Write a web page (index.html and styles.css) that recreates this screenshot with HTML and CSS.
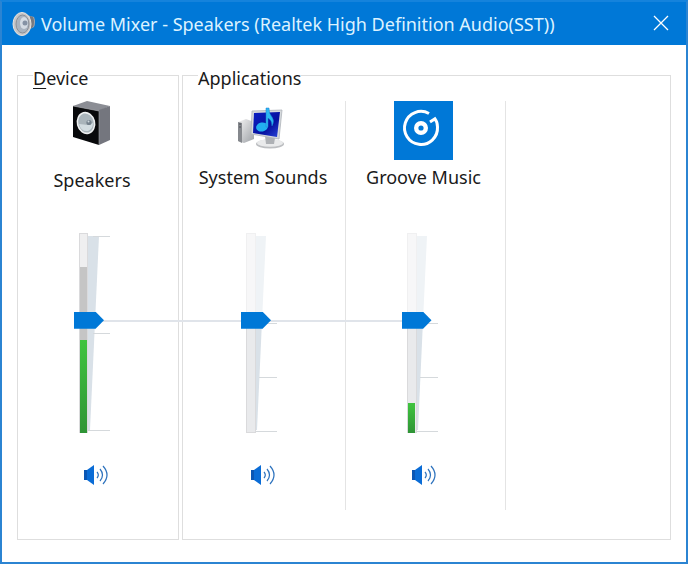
FILE: index.html
```
<!DOCTYPE html>
<html lang="en">
  <head>
    <meta charset="utf-8">
    <title>Volume Mixer</title>
    <link rel="stylesheet" href="styles.css">
  </head>
  <body>
    <!-- shared drawings -->
    <svg class="defs" width="0" height="0" aria-hidden="true">
      <defs>
        <linearGradient id="level" x1="0" y1="0" x2="0" y2="1">
          <stop offset="0" stop-color="#3fc43f"/>
          <stop offset="1" stop-color="#2f9436"/>
        </linearGradient>
        <linearGradient id="metal" x1="0" y1="0" x2="1" y2="1">
          <stop offset="0" stop-color="#f4f4f4"/>
          <stop offset="1" stop-color="#9da1a6"/>
        </linearGradient>
        <linearGradient id="screen" x1="0" y1="0" x2="1" y2="1">
          <stop offset="0" stop-color="#0a1fc4"/>
          <stop offset="0.6" stop-color="#0712a0"/>
          <stop offset="1" stop-color="#2c48dc"/>
        </linearGradient>
        <symbol id="volume" viewBox="0 0 24 22">
          <path d="M0 6h4v10H0z" fill="#0a56b4"/>
          <path d="M3 6l7-5v20l-7-5z" fill="#0a6cd6"/>
          <path d="M13 8q2.600 3 0 6M16 5q5 6 0 12M19 2q8 9 0 18" fill="none" stroke="#2d72bd" stroke-width="1.200"/>
        </symbol>
      </defs>
    </svg>

    <div class="window">
      <header class="titlebar">
        <svg class="app-icon" width="24" height="26" viewBox="0 0 24 26" aria-hidden="true">
          <path d="M9 1l9 4 4 1q2 5 0 10l-4 2-7 6z" fill="#a4a6ab"/>
          <path d="M18 5l3 1q2 5 0 10l-3 2z" fill="#77797f"/>
          <ellipse cx="10" cy="13" rx="9" ry="11.500" fill="#c6c6c8" stroke="#e8e4e0"/>
          <ellipse cx="10.500" cy="13" rx="6.500" ry="9" fill="#a9b3bf" stroke="#8b8f96"/>
          <ellipse cx="12" cy="12" rx="4" ry="6" fill="#d5dce4"/>
          <circle cx="13" cy="12" r="2.500" fill="#8592a4"/>
        </svg>
        <h1>Volume Mixer - Speakers (Realtek High Definition Audio(SST))</h1>
        <button class="close" type="button" aria-label="Close">
          <svg width="16" height="16" viewBox="0 0 16 16"><path d="M1 1l14 14M15 1L1 15" stroke="#fff" stroke-width="1.300"/></svg>
        </button>
      </header>

      <main class="mixer">
        <div class="link-line"></div>

        <fieldset class="group">
          <legend><u>D</u>evice</legend>
          <div class="channels">
            <div class="channel device">
              <svg class="icon" width="60" height="60" viewBox="0 0 60 60" aria-hidden="true">
                <path d="M11 5l14-5 23 5-11 5z" fill="#8b8d94"/>
                <path d="M37 9l11-4v34l-11 5z" fill="#74767e"/>
                <path d="M11 5l26 5v34l-26-8z" fill="#08090b"/>
                <path d="M11 5l26 5v34" fill="none" stroke="#a2a4aa" stroke-width="0.600"/>
                <ellipse cx="24" cy="22" rx="8.500" ry="10.500" fill="#aab5bb" stroke="#eef0f1" stroke-width="1.600" transform="rotate(-14 24 22)"/>
                <path d="M17 23q2 8 9 7 5-2 5-8l-5 2z" fill="#d3dde1"/>
                <circle cx="27" cy="21.500" r="2.600" fill="#75828d"/>
                <circle cx="26.500" cy="20.500" r="1" fill="#cfd8dd"/>
              </svg>
              <label class="name" for="vol-device">Speakers</label>
              <div class="fader">
                <svg width="36" height="200" viewBox="0 0 36 200" aria-hidden="true">
                  <path d="M14 3h11l-9 194h-2z" fill="#d9e1e8"/>
                  <path d="M19 3.500h17M19 100.500h17M14 197.500h22" stroke="#d5d9dc"/>
                  <rect x="5.500" y="0.500" width="8" height="199" fill="#efeff0" stroke="#dadadc"/>
                  <rect x="6" y="34" width="7" height="73" fill="#c5c5c5"/>
                  <rect x="6" y="107" width="7" height="93" fill="url(#level)"/>
                </svg>
                <input type="range" id="vol-device" min="0" max="100" value="57">
              </div>
              <button class="mute" type="button" aria-label="Mute Speakers"><svg width="24" height="22"><use href="#volume"/></svg></button>
            </div>
          </div>
        </fieldset>

        <fieldset class="group">
          <legend>Applications</legend>
          <div class="channels">
            <div class="channel">
              <svg class="icon" width="60" height="60" viewBox="0 0 60 60" aria-hidden="true">
                <path d="M5 21l8-3 8 3v17l-10 4-6-2z" fill="url(#metal)"/>
                <path d="M5 21l4 1v20l-4-2z" fill="#85888d"/>
                <path d="M6 23h2M6 26h2" stroke="#4d5156"/>
                <ellipse cx="37" cy="43" rx="14" ry="4.500" fill="#bcbec1"/>
                <ellipse cx="37" cy="42" rx="13" ry="3.800" fill="#e9eaeb"/>
                <path d="M32 35l10 2-1 6h-8z" fill="#aeb1b5"/>
                <path d="M19 10l30-1-3 29-28-5z" fill="#d6dadd" stroke="#aeb4ba" stroke-width="0.800"/>
                <path d="M21 12l26-1-3 25-24-4z" fill="url(#screen)"/>
                <ellipse cx="29" cy="26" rx="6" ry="4.500" fill="#22aef0" transform="rotate(-12 29 26)"/>
                <path d="M33 26V7h3q0 6 3 9 3 4 0 9 0-6-4-8v9z" fill="#2bb7f2" stroke="#1a7fd0" stroke-width="0.500"/>
              </svg>
              <label class="name" for="vol-system">System Sounds</label>
              <div class="fader">
                <svg width="36" height="200" viewBox="0 0 36 200" aria-hidden="true">
                  <path d="M15 3h10l-4 85h-6z" fill="#eff3f6"/>
                  <path d="M15 88h6l-5 109h-1z" fill="#d9e1e8"/>
                  <path d="M20 90.500h16M18 144.500h18M15 198.500h21" stroke="#d5d9dc"/>
                  <rect x="5.500" y="0.500" width="9" height="88" fill="#f7f7f8" stroke="#f0f0f1"/>
                  <rect x="5.500" y="88.500" width="9" height="111" fill="#e9eaec" stroke="#dadadc"/>
                </svg>
                <input type="range" id="vol-system" min="0" max="100" value="57">
              </div>
              <button class="mute" type="button" aria-label="Mute System Sounds"><svg width="24" height="22"><use href="#volume"/></svg></button>
            </div>

            <div class="channel">
              <svg class="icon" width="60" height="60" viewBox="0 0 60 60" aria-hidden="true">
                <rect width="59" height="59" fill="#0078d7"/>
                <path d="M35 12.500A16.500 16.500 0 1 0 43.500 26Q43.500 21 41 17.800L36 21" fill="none" stroke="#fff" stroke-width="3"/>
                <circle cx="27" cy="27" r="4.800" fill="none" stroke="#fff" stroke-width="4.400"/>
              </svg>
              <label class="name" for="vol-groove">Groove Music</label>
              <div class="fader">
                <svg width="36" height="200" viewBox="0 0 36 200" aria-hidden="true">
                  <path d="M15 3h10l-4 85h-6z" fill="#eff3f6"/>
                  <path d="M15 88h6l-5 109h-1z" fill="#d9e1e8"/>
                  <path d="M20 90.500h16M18 144.500h18M15 198.500h21" stroke="#d5d9dc"/>
                  <rect x="5.500" y="0.500" width="9" height="88" fill="#f7f7f8" stroke="#f0f0f1"/>
                  <rect x="5.500" y="88.500" width="9" height="111" fill="#e9eaec" stroke="#dadadc"/>
                  <rect x="6" y="170" width="7" height="30" fill="url(#level)"/>
                </svg>
                <input type="range" id="vol-groove" min="0" max="100" value="57">
              </div>
              <button class="mute" type="button" aria-label="Mute Groove Music"><svg width="24" height="22"><use href="#volume"/></svg></button>
            </div>
          </div>
        </fieldset>
      </main>
    </div>
  </body>
</html>
```

FILE: styles.css
```
* {
    box-sizing: border-box;
}

body {
    margin: 0;
    font-family: "Noto Sans", "Open Sans", sans-serif;
    font-size: 18px;
    line-height: 24px;
    color: #1a1a1a;
}

button {
    display: block;
    padding: 0;
    border: 0;
    background: none;
}

svg {
    display: block;
}

.defs {
    position: absolute;
}

.window {
    display: flex;
    flex-direction: column;
    min-height: 100vh;
    border: 2px solid #2b84d2;
    border-top-color: #1583dc;
    background: #fff;
}

/* title bar */
.titlebar {
    display: flex;
    align-items: center;
    height: 43px;
    padding: 0 15px 0 10px;
    background: #0078d7;
}

.titlebar h1 {
    flex: 1;
    margin: 0 0 0 5px;
    font-size: 18px;
    font-weight: 400;
    color: #dcf2ff;
    white-space: nowrap;
}

.close {
    padding: 0 2px 2px;
}

/* groups */
.mixer {
    position: relative;
    display: grid;
    grid-template-columns: 162px 1fr;
    gap: 3px;
    flex: 1;
    padding: 15px 15px 22px;
}

.group {
    min-width: 0;
    margin: 0;
    padding: 11px 0 0;
    border: 1px solid #dedede;
}

.group legend {
    margin-left: 15px;
    padding: 6px 0 0;
}

.group u {
    text-underline-offset: 3px;
}

.channels {
    display: flex;
}

/* one column of the mixer */
.channel {
    display: flex;
    flex-direction: column;
    align-items: center;
    width: 160px;
    padding: 0 4px 20px 0;
    border-right: 1px solid #e4e4e4;
}

.channel:first-child {
    width: 163px;
    padding-right: 2px;
}

.channel.device {
    width: 100%;
    padding-right: 12px;
    border-right: 0;
}

.name {
    height: 72px;
    padding-top: 4px;
    white-space: nowrap;
}

.device .name {
    padding-top: 7px;
}

.fader {
    display: grid;
    margin-right: 8px;
}

.device .fader {
    margin-right: 0;
}

.fader > * {
    grid-area: 1 / 1;
}

.fader input {
    position: relative;
    width: 30px;
    height: 200px;
    margin: 0;
    appearance: none;
    background: none;
    writing-mode: vertical-lr;
    direction: rtl;
}

.fader input::-webkit-slider-thumb {
    appearance: none;
    width: 30px;
    height: 17px;
    background: #0078d7;
    clip-path: polygon(0 0, 72% 0, 100% 50%, 72% 100%, 0 100%);
}

.mute {
    margin-top: 31px;
    padding: 0 0 4px;
}

.device .mute {
    margin-left: 8px;
}

/* thin line that ties the thumbs together */
.link-line {
    position: absolute;
    top: 275px;
    left: 88px;
    width: 325px;
    height: 2px;
    background: #e0e4ea;
}
```
